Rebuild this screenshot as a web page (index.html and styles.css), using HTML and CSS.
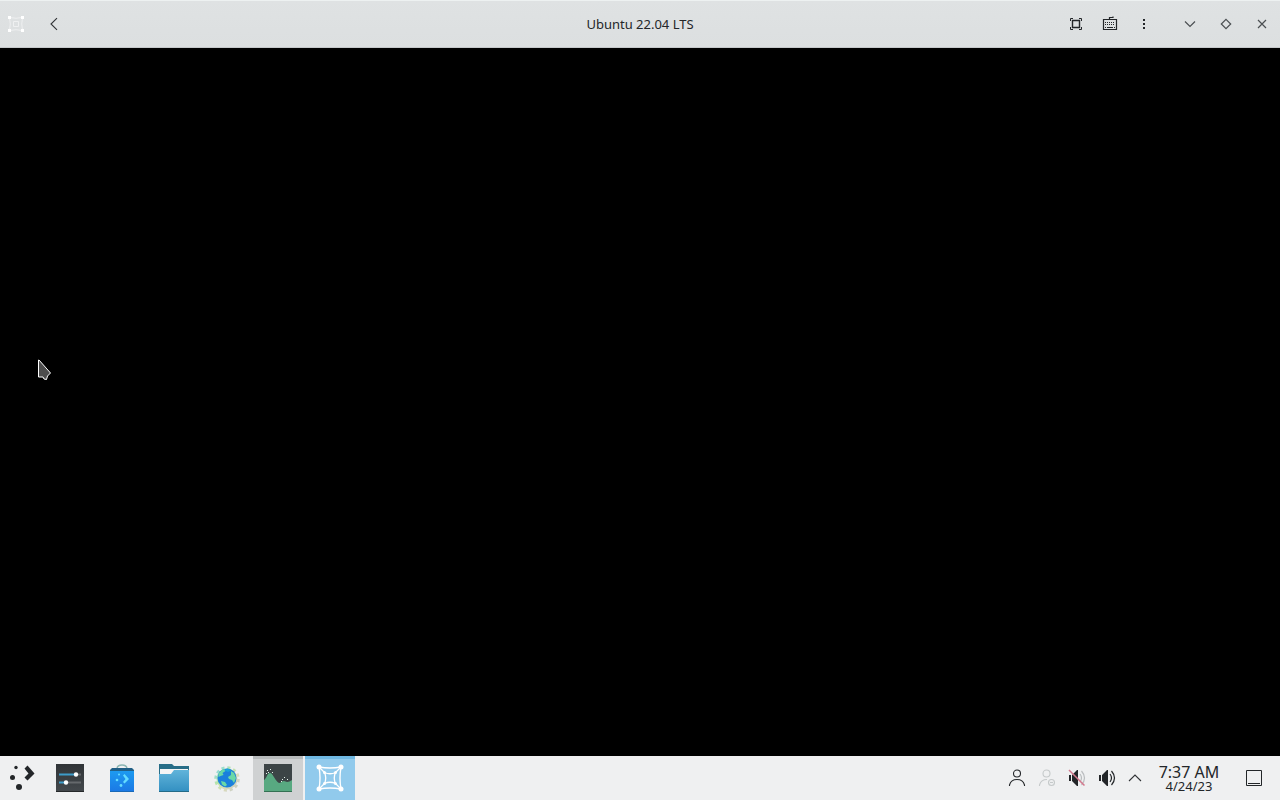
FILE: index.html
```html
<!DOCTYPE html>
<html lang="en">
<head>
<meta charset="utf-8">
<title>Ubuntu 22.04 LTS</title>
<link rel="stylesheet" href="styles.css">
</head>
<body>
<header class="titlebar">
  <div class="titlebar-start">
    <svg class="app-icon" width="18" height="18" viewBox="0 0 18 18" fill="none" stroke="#eff0f1" aria-hidden="true">
      <path d="M2.500 2.500Q9 4 15.500 2.500Q14 9 15.500 15.500Q9 14 2.500 15.500Q4 9 2.500 2.500Z"/>
      <path d="M6.500 6.500h5v5h-5z"/>
      <path d="M1 1h3v3h-3zM14 1h3v3h-3zM1 14h3v3h-3zM14 14h3v3h-3z" fill="#fff" stroke="none"/>
    </svg>
    <button class="tool-button" type="button" aria-label="Back">
      <svg width="16" height="16" viewBox="0 0 16 16" fill="none" stroke="#303336" stroke-width="1.100"><path d="M11 2.200L5 8l6 5.800"/></svg>
    </button>
  </div>
  <h1 class="title">Ubuntu 22.04 LTS</h1>
  <div class="titlebar-end">
    <button class="tool-button" type="button" aria-label="Fullscreen">
      <svg width="16" height="16" viewBox="0 0 16 16" fill="none" stroke="#232629"><path d="M4.500 4.500h7v7h-7z" stroke-width="1.400"/><path d="M2.500 5V2.500H5M11 2.500h2.500V5M13.500 11v2.500H11M5 13.500H2.500V11"/></svg>
    </button>
    <button class="tool-button" type="button" aria-label="Keyboard">
      <svg width="16" height="16" viewBox="0 0 16 16" fill="none" stroke="#232629"><path d="M1.500 3.500h13v10h-13zM7.500 3V1.500h3.500V.5" stroke-width="1.200"/><path d="M3 6.500h10M3 8.500h10" stroke-dasharray="1 1"/><path d="M3 11.500h1M5 11.500h6M12 11.500h1"/></svg>
    </button>
    <button class="tool-button" type="button" aria-label="Menu">
      <svg width="16" height="16" viewBox="0 0 16 16" fill="#232629"><path d="M7 3h2v2H7zM7 7h2v2H7zM7 11h2v2H7z"/></svg>
    </button>
    <div class="window-controls">
      <button class="window-button" type="button" aria-label="Minimize">
        <svg width="16" height="16" viewBox="0 0 16 16" fill="none" stroke="#4b4f52" stroke-width="1.200"><path d="M3 5.500l5 5 5-5"/></svg>
      </button>
      <button class="window-button" type="button" aria-label="Restore">
        <svg width="16" height="16" viewBox="0 0 16 16" fill="none" stroke="#4b4f52" stroke-width="1.200"><path d="M8 3.300L12.700 8 8 12.700 3.300 8z"/></svg>
      </button>
      <button class="window-button" type="button" aria-label="Close">
        <svg width="16" height="16" viewBox="0 0 16 16" fill="none" stroke="#4b4f52" stroke-width="1.200"><path d="M4 4l8 8M12 4l-8 8"/></svg>
      </button>
    </div>
  </div>
</header>

<main class="display">
  <svg class="cursor" width="16" height="24" viewBox="0 0 16 24" aria-hidden="true">
    <path d="M1.500 2v17h4.500l1 2 2.500.5 1-3.500 3-3L2 2z" fill="#4d4d4d" stroke="#fff" stroke-linejoin="round"/>
  </svg>
</main>

<footer class="taskbar">
  <button class="launcher" type="button" aria-label="Application launcher">
    <svg width="32" height="32" viewBox="0 0 32 32" fill="#232629"><circle cx="10" cy="5.500" r="1.700"/><circle cx="6.500" cy="15.500" r="2.500"/><circle cx="13" cy="25" r="3"/><path d="M18.500 6.500L21.500 3.500 28.500 11.500 21.500 18.500 18.500 15.500 22.500 11.500z"/></svg>
  </button>
  <nav class="tasks" aria-label="Tasks">
    <button class="task" type="button" aria-label="System settings">
      <svg width="32" height="32" viewBox="0 0 32 32"><defs><linearGradient id="dark" x2="0" y2="1"><stop stop-color="#303437"/><stop offset="1" stop-color="#44494d"/></linearGradient></defs><path d="M2 2h28v28H2z" fill="url(#dark)"/><path d="M2 29h28v1H2z" fill="#25282a"/><path d="M5 11.500h17v2H5zM5 19.500h7v2H5z" fill="#3d9cc9"/><path d="M22 11.500h5v2h-5zM12 19.500h15v2H12z" fill="#65696c"/><circle cx="22" cy="12.500" r="2.200" fill="#fff"/><circle cx="12" cy="20.500" r="2.200" fill="#fff"/></svg>
    </button>
    <button class="task" type="button" aria-label="Discover">
      <svg width="32" height="32" viewBox="0 0 32 32"><defs><linearGradient id="bag" x2="0" y2="1"><stop stop-color="#1d9af0"/><stop offset="1" stop-color="#1b78e5"/></linearGradient></defs><path d="M11 8V6.500Q11.500 3 16 3t5 3.500V8" fill="none" stroke="#8bb5b3" stroke-width="1.500"/><path d="M4 10V8l2-2h20l2 2v2z" fill="#215f86"/><path d="M4 9h24v21H4z" fill="url(#bag)"/><path d="M4 29h24v1H4z" fill="#1969b7"/><g fill="#64dcff"><circle cx="13" cy="12.500" r="1"/><circle cx="11" cy="18" r="1.300"/><circle cx="15" cy="23.500" r="1.400"/><path d="M17 13.500l1.500-1.500 4.500 5-4.500 4.500-1.500-1.500 2.500-3z"/></g></svg>
    </button>
    <button class="task" type="button" aria-label="File manager">
      <svg width="32" height="32" viewBox="0 0 32 32"><defs><linearGradient id="folder" x2="0" y2="1"><stop stop-color="#61b4da"/><stop offset="1" stop-color="#328fc1"/></linearGradient></defs><path d="M1 2h13l2 2h15v10H1z" fill="#276d87"/><path d="M2 7h28v8H2z" fill="#f5f5f5"/><path d="M1 12h12l3-4h15v22H1z" fill="url(#folder)"/><path d="M1 29h30v1H1z" fill="#236b88"/></svg>
    </button>
    <button class="task" type="button" aria-label="Web browser">
      <svg width="32" height="32" viewBox="0 0 32 32"><defs><linearGradient id="gear" x2="1" y2="1"><stop stop-color="#88d7e5"/><stop offset=".35" stop-color="#b5e4aa"/><stop offset=".65" stop-color="#dcdcb9"/><stop offset="1" stop-color="#c3c9c6"/></linearGradient></defs><circle cx="17" cy="17" r="11" fill="none" stroke="url(#gear)" stroke-width="3.500" stroke-dasharray="3 2.760"/><circle cx="17" cy="17" r="10.500" fill="url(#gear)"/><circle cx="17" cy="16" r="9.500" fill="#1b80dc"/><path d="M8.500 12l3-4 3-1 1 2-3 2 1 2-3 1-2 1zM21 9l3 2 2 5-2 5-2-3-3-1-1-2 3-2zM11 19l4 1 2 3-2 1.500-3-2z" fill="#6bd9a6"/><path d="M14 8l4-1.500 3 2-3 1.500z" fill="#17a3dc"/></svg>
    </button>
    <button class="task task-running" type="button" aria-label="System monitor">
      <svg width="32" height="32" viewBox="0 0 32 32"><path d="M2 2h28v28H2z" fill="#3c4446"/><path d="M2 18c3-2 3-7 6-7s5 8 9 10c2 0 3-2 5-2 1 0 2 1 3 1 2 0 3-1 5-2v12H2z" fill="#58a981"/><path d="M2 29h28v1H2z" fill="#347153"/><path d="M5 8h1v1H5zM8 7h1v1H8zM4 11h1v1H4zM6 10h1v1H6zM10 10h1v1h-1zM20 17h1v1h-1zM22 15h1v1h-1zM25 17h1v1h-1zM19 19h1v1h-1z" fill="#e6f5ed"/></svg>
    </button>
    <button class="task task-active" type="button" aria-label="Ubuntu 22.04 LTS" aria-current="true">
      <svg width="32" height="32" viewBox="0 0 32 32" fill="none" stroke="#fff"><path d="M5 5Q16 7 27 5Q25 16 27 27Q16 25 5 27Q7 16 5 5Z" stroke-width="1.400"/><path d="M10.500 10.500Q16 13 21.500 10.500Q19 16 21.500 21.500Q16 19 10.500 21.500Q13 16 10.500 10.500ZM5 5l5.500 5.500M27 5l-5.500 5.500M5 27l5.500-5.500M27 27l-5.500-5.500" stroke-width="1.300"/><g fill="#fff" stroke="none"><circle cx="5" cy="5" r="2.500"/><circle cx="27" cy="5" r="2.500"/><circle cx="5" cy="27" r="2.500"/><circle cx="27" cy="27" r="2.500"/><circle cx="10.500" cy="10.500" r="1.500"/><circle cx="21.500" cy="10.500" r="1.500"/><circle cx="10.500" cy="21.500" r="1.500"/><circle cx="21.500" cy="21.500" r="1.500"/></g></svg>
    </button>
  </nav>
  <div class="tray">
    <button class="tray-button" type="button" aria-label="User">
      <svg width="22" height="22" viewBox="0 0 22 22" fill="none" stroke="#232629" stroke-width="1.100"><circle cx="11" cy="6.500" r="3.500"/><path d="M3.500 19v-1Q5 12.500 11 12.500T18.500 18v1"/></svg>
    </button>
    <button class="tray-button" type="button" aria-label="User status offline">
      <svg width="22" height="22" viewBox="0 0 22 22" fill="none" stroke="#c5c9ca" stroke-width="1.100"><circle cx="10.500" cy="6.500" r="3.500"/><path d="M3.500 19v-1Q5 12.500 11 12.500"/><circle cx="15.500" cy="15.500" r="3"/><path d="M14 15.500h3"/></svg>
    </button>
    <button class="tray-button" type="button" aria-label="Microphone muted">
      <svg width="22" height="22" viewBox="0 0 22 22" fill="none"><path d="M3 8h2v6H3zM6 8l5-5h1v16h-1l-5-5z" fill="#232629"/><path d="M14 7q3 4 0 8M15.500 4q6 7 0 14" stroke="#babdbf" stroke-width="1.200"/><path d="M3 3l15.500 15.500" stroke="#d4788d" stroke-width="1.500"/></svg>
    </button>
    <button class="tray-button" type="button" aria-label="Volume">
      <svg width="22" height="22" viewBox="0 0 22 22" fill="none"><path d="M3 8h2v6H3zM6 8l5-5h1v16h-1l-5-5z" fill="#232629"/><path d="M14 7q3 4 0 8M15.500 4q6 7 0 14" stroke="#232629" stroke-width="1.200"/></svg>
    </button>
    <button class="tray-expand" type="button" aria-label="Show hidden icons">
      <svg width="16" height="16" viewBox="0 0 16 16" fill="none" stroke="#303336" stroke-width="1.100"><path d="M2 11l6-6 6 6"/></svg>
    </button>
    <button class="clock" type="button">
      <span class="clock-time">7:37 AM</span>
      <span class="clock-date">4/24/23</span>
    </button>
    <button class="show-desktop" type="button" aria-label="Show desktop">
      <svg width="18" height="18" viewBox="0 0 18 18" fill="none" stroke="#232629"><path d="M1.500 1.500h15v15h-15zM3 14.500h12"/></svg>
    </button>
  </div>
</footer>
</body>
</html>
```
FILE: styles.css
```css
* {
  box-sizing: border-box;
}

body {
  margin: 0;
  min-height: 100vh;
  display: flex;
  flex-direction: column;
  background: #000;
  color: #232629;
  font-family: "Noto Sans", sans-serif;
}

button {
  display: flex;
  align-items: center;
  justify-content: center;
  padding: 0;
  border: 0;
  background: none;
  color: inherit;
  font: inherit;
}

svg {
  display: block;
}

.titlebar {
  display: grid;
  grid-template-columns: 1fr auto 1fr;
  align-items: center;
  height: 48px;
  background: linear-gradient(#dfe2e3, #dcdfe0);
  border-top: 1px solid #edf1f1;
  border-bottom: 1px solid #c5c8ca;
}

.titlebar-start,
.titlebar-end,
.window-controls {
  display: flex;
  align-items: center;
}

.titlebar-start {
  gap: 12px;
  padding-left: 7px;
}

.titlebar-end {
  justify-content: flex-end;
}

.title {
  margin: 0;
  font-size: 13px;
  font-weight: 400;
  line-height: 20px;
}

.tool-button {
  width: 34px;
  height: 34px;
}

.window-controls {
  margin-left: 11px;
}

.window-button {
  width: 36px;
  height: 36px;
}

.display {
  position: relative;
  flex: 1;
  background: #000;
}

.cursor {
  position: absolute;
  left: 37px;
  top: 310px;
}

.taskbar {
  display: flex;
  gap: 2px;
  height: 44px;
  background: #eff0f1;
}

.launcher {
  width: 43px;
}

.tasks {
  display: flex;
  flex: 1;
  gap: 2px;
}

.task {
  width: 50px;
  border-top: 3px solid transparent;
  border-bottom: 3px solid transparent;
}

.task-running {
  background: #cfd1d2;
  border-top-color: #b7babb;
  border-bottom-color: #cfd1d2;
}

.task-active {
  background: #91caec;
  border-top-color: #6fb8e2;
  border-bottom-color: #91caec;
}

.tray {
  display: flex;
  padding-right: 2px;
}

.tray-button {
  width: 30px;
}

.tray-expand {
  width: 26px;
}

.clock {
  flex-direction: column;
  width: 82px;
}

.clock-time {
  font-size: 16px;
  line-height: 16px;
}

.clock-date {
  font-size: 13px;
  line-height: 12px;
}

.show-desktop {
  width: 48px;
}
```
